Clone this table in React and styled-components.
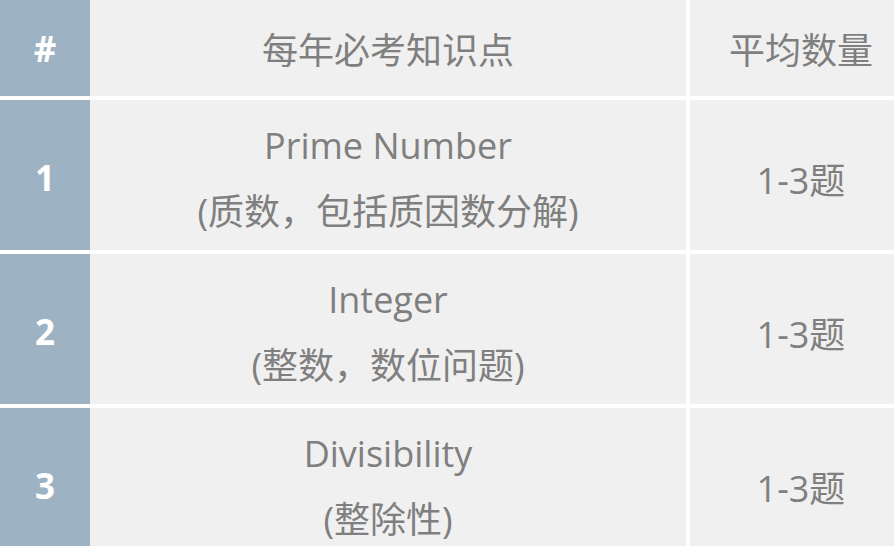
import React from "react";
import styled, { createGlobalStyle } from "styled-components";

const rows = [
  { no: "1", en: "Prime Number", zh: "(质数，包括质因数分解)", count: "1-3题" },
  { no: "2", en: "Integer", zh: "(整数，数位问题)", count: "1-3题" },
  { no: "3", en: "Divisibility", zh: "(整除性)", count: "1-3题" },
];

export default function App() {
  return (
    <>
      <GlobalStyle />
      <Table>
        <Row header>
          <NumCell>#</NumCell>
          <Cell>每年必考知识点</Cell>
          <CountCell>平均数量</CountCell>
        </Row>
        {rows.map(r => (
          <Row key={r.no}>
            <NumCell>{r.no}</NumCell>
            <Cell body>
              <Line>{r.en}</Line>
              <Line>{r.zh}</Line>
            </Cell>
            <CountCell body>{r.count}</CountCell>
          </Row>
        ))}
      </Table>
    </>
  );
}

const GlobalStyle = createGlobalStyle`
  html, body {
    margin: 0;
    padding: 0;
    background: #ffffff;
    overflow: hidden;
  }
  body {
    font-family: "Open Sans", "Noto Sans CJK SC", sans-serif;
  }
`

const Table = styled.div`
  display: grid;
  row-gap: 4px;
  width: 912px;
  background: #ffffff;
`

const Row = styled.div`
  display: grid;
  grid-template-columns: 90px 596px 226px;
  height: ${p => (p.header ? "96px" : "150px")};
`

const NumCell = styled.div`
  display: flex;
  align-items: center;
  justify-content: center;
  background: #9db3c3;
  color: #ffffff;
  font-weight: 700;
  font-size: 35px;
  padding-top: ${p => (p.children === "#" ? "0" : "4px")};
`

const Cell = styled.div`
  display: flex;
  flex-direction: column;
  align-items: center;
  justify-content: center;
  background: #f0f0f0;
  color: #7f7f7f;
  font-size: 36px;
  padding-top: ${p => (p.body ? "7px" : "0")};
`

const CountCell = styled(Cell)`
  border-left: 4px solid #ffffff;
`

const Line = styled.div`
  line-height: 66px;
  white-space: nowrap;
`
